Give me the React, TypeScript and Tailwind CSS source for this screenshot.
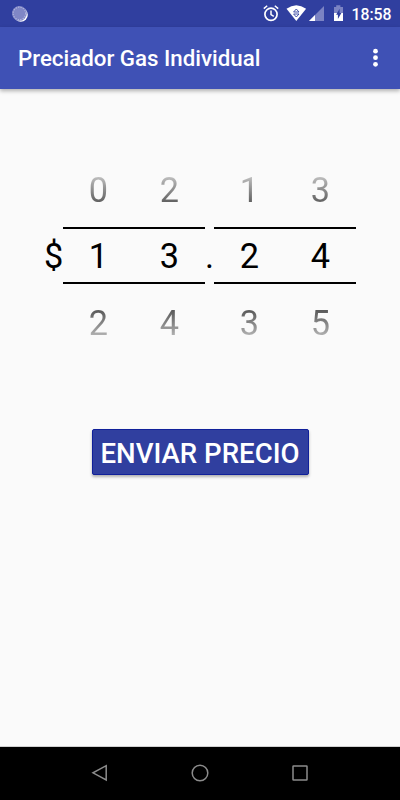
import clsx from "clsx";

function SyncIcon() {
  return (
    <svg width="16" height="16" viewBox="0 0 16 16">
      <circle cx="8.8" cy="8.8" r="7" fill="#fff" />
      <circle cx="7.4" cy="7.4" r="7.4" fill="#8087c6" />
      <circle
        cx="7.4"
        cy="7.4"
        r="6.3"
        fill="none"
        stroke="#b4b8de"
        strokeWidth="1.1"
        strokeDasharray="1.3 1.2"
      />
    </svg>
  );
}

function StatusIcons() {
  return (
    <svg width="84" height="20" viewBox="262 4 84 20" fill="none">
      {/* alarm */}
      <circle cx="271" cy="14.3" r="6.1" stroke="#fff" strokeWidth="1.7" />
      <path
        d="M271 10.5v4.1l2.8 1.7M263.8 8.6l3.4-2.9M278.2 8.6l-3.4-2.9"
        stroke="#fff"
        strokeWidth="1.5"
      />
      {/* wifi */}
      <path d="M286.5 8.8Q296.3 1.6 306.1 8.8L296.3 21z" fill="#fff" />
      <path d="M293.6 12l2.7-3 2.7 3zM293.6 14l2.7 3 2.7-3z" stroke="#303f9f" strokeWidth="0.9" />
      {/* signal */}
      <path d="M324 6v15h-15z" fill="#7b83c3" />
      <path d="M315 15v6h-6z" fill="#fff" />
      {/* battery */}
      <path d="M334 7h2.2V5.2h4.2V7h2.6v7h-9z" fill="#7b83c3" />
      <path d="M334 13h9v8h-9z" fill="#fff" />
      <path d="M339.6 8.8v4.3h1.8l-3.5 6v-4.3h-1.8z" fill="#303f9f" />
    </svg>
  );
}

function Wheel({ values }: { values: number[] }) {
  return (
    <div className="w-[71px] text-center text-[34.3px] leading-[40px]">
      <div className="h-[58px] bg-linear-to-b from-[#bdbdbd] from-[14%] to-[#5c5c5c] to-[60%] bg-clip-text pt-px text-transparent">
        {values[0]}
      </div>
      <div className="h-[57px] border-y-2 border-black pt-[7px] text-black">{values[1]}</div>
      <div className="mt-[19px] h-[44px] bg-linear-to-b from-[#5c5c5c] from-[18%] to-[#b8b8b8] to-[78%] bg-clip-text text-transparent">
        {values[2]}
      </div>
    </div>
  );
}

function Picker({ wheels, className }: { wheels: number[][]; className?: string }) {
  return (
    <div className={clsx("flex", className)}>
      {wheels.map((values, i) => (
        <Wheel key={i} values={values} />
      ))}
    </div>
  );
}

export default function App() {
  return (
    <div className="flex h-[800px] w-[400px] flex-col overflow-hidden bg-[#fafafa] font-[Roboto,sans-serif]">
      <div className="flex h-[27px] items-center bg-[#303f9f] pl-3 text-white">
        <SyncIcon />
        <div className="ml-auto flex items-center pr-[9px]">
          <StatusIcons />
          <span className="ml-[5.5px] w-[39.5px] pt-[2px] text-[15.8px] leading-5 font-medium">18:58</span>
        </div>
      </div>

      <header className="z-10 flex h-[62px] items-center justify-between bg-[#3f51b5] pr-[21px] pl-[18px] text-white shadow-[0_2px_4px_rgba(0,0,0,0.3)]">
        <h1 className="pt-[2px] text-[22.3px] font-medium whitespace-nowrap">
          Preciador Gas Individual
        </h1>
        <svg width="7" height="20" viewBox="0 0 7 20" fill="#fff">
          <circle cx="3.5" cy="3.2" r="2.4" />
          <circle cx="3.5" cy="9.7" r="2.4" />
          <circle cx="3.5" cy="16.3" r="2.4" />
        </svg>
      </header>

      <main className="flex flex-1 flex-col items-center">
        <div className="mt-[80px] flex w-full pl-[44px] text-[34.3px] leading-[40px]">
          <span className="w-[19px] pt-[67px]">$</span>
          <Picker wheels={[[0, 1, 2], [2, 3, 4]]} />
          <span className="w-[9px] pt-[67px] text-center">.</span>
          <Picker wheels={[[1, 2, 3], [3, 4, 5]]} />
        </div>
        <button className="mt-[82px] h-[46px] w-[217px] rounded-[2px] border border-[#10209a] bg-[#303f9f] pt-px text-[27.6px] leading-[46px] font-medium whitespace-nowrap text-white shadow-[0_2px_3px_rgba(0,0,0,0.3)]">
          ENVIAR PRECIO
        </button>
      </main>

      <nav className="flex h-[54px] items-center justify-center gap-[82px] border-t border-[#d0d0d0] bg-black pb-[2px]">
        <svg width="18" height="18" viewBox="0 0 18 18" fill="none" stroke="#8c8c8c" strokeWidth="1.5">
          <path d="M15.2 1.7v14.2L2 8.8z" />
        </svg>
        <svg width="18" height="18" viewBox="0 0 18 18" fill="none" stroke="#8c8c8c" strokeWidth="1.5">
          <circle cx="9" cy="9" r="7.8" />
        </svg>
        <svg width="18" height="18" viewBox="0 0 18 18" fill="none" stroke="#8c8c8c" strokeWidth="1.5">
          <rect x="2" y="2" width="14" height="14" rx="0.5" />
        </svg>
      </nav>
    </div>
  );
}
